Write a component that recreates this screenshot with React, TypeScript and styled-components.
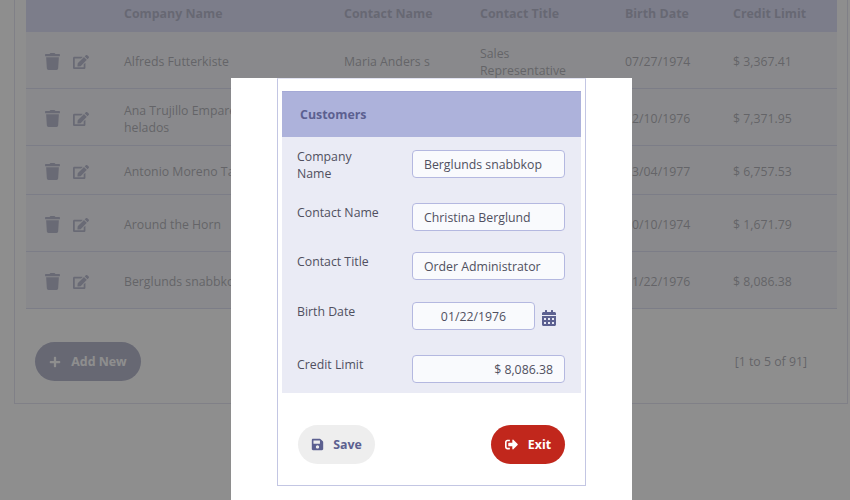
import * as React from "react";
import styled, { createGlobalStyle } from "styled-components";
import { FaCalendarAlt, FaEdit, FaPlus, FaSave, FaSignOutAlt, FaTrash } from "react-icons/fa";

const FONT = `"Open Sans", "Noto Sans", "Liberation Sans", sans-serif`;

const GlobalStyle = createGlobalStyle`
  html, body {
    margin: 0;
    padding: 0;
    height: 500px;
    overflow: hidden;
    background: #fff;
    font-family: ${FONT};
  }
  * { box-sizing: border-box; }
`;

const Page = styled.div`
  width: 850px;
  height: 500px;
  padding: 0 2px 0 14px;
  overflow: hidden;
`;

const Panel = styled.div`
  height: 404px;
  padding: 0 10px 0 11px;
  border: 1px solid #c3c6e3;
  border-top: 0;
`;

const Row = styled.div<{ $h: number }>`
  display: grid;
  grid-template-columns: 98px 220px 136px 145px 108px 105px;
  align-items: center;
  height: ${(p) => p.$h}px;
  padding-top: 3px;
  border-bottom: 1px solid #b4b8e0;
  background: #eaebf5;
  font-size: 12.3px;
  line-height: 17px;
  color: #50505f;
`;

const HeaderRow = styled(Row)`
  background: #b4b8ec;
  border-bottom: 0;
  padding: 0 0 6px;
  font-size: 12.4px;
  font-weight: 700;
  color: #5c6090;
`;

const Cell = styled.div<{ $pad?: number }>`
  padding-right: ${(p) => p.$pad ?? 8}px;
`;

const Actions = styled.div`
  display: flex;
  align-items: center;
  gap: 12px;
  padding-left: 18px;
  color: #666a98;
`;

const Footer = styled.div`
  display: flex;
  align-items: center;
  justify-content: space-between;
  padding: 33px 30px 0 9px;
`;

const Pill = styled.button<{ $bg: string; $fg: string; $w: number; $gap: number }>`
  display: flex;
  align-items: center;
  justify-content: center;
  gap: ${(p) => p.$gap}px;
  width: ${(p) => p.$w}px;
  height: 39px;
  padding: 0;
  border: 0;
  border-radius: 20px;
  background: ${(p) => p.$bg};
  color: ${(p) => p.$fg};
  font-family: ${FONT};
  font-size: 12.4px;
  font-weight: 700;
`;

const Range = styled.span`
  font-size: 12.3px;
  color: #50505f;
`;

const Overlay = styled.div`
  position: fixed;
  inset: 0;
  background: rgba(107, 107, 107, 0.76);
`;

const Modal = styled.div`
  position: fixed;
  left: 231px;
  top: 78px;
  width: 401px;
  height: 422px;
  background: #fff;
  padding: 0 46px;
`;

const Card = styled.div`
  height: 408px;
  padding: 12px 4px 0;
  border: 1px solid #c3c6e3;
  border-top-color: #e2e3f2;
`;

const CardHeader = styled.div`
  display: flex;
  align-items: center;
  height: 46px;
  padding-left: 18px;
  background: #adb2db;
  border-top: 1px solid #a4a9d6;
  font-size: 12.4px;
  font-weight: 700;
  color: #5c6090;
`;

const Form = styled.div`
  height: 256px;
  padding: 13px 16px 0 15px;
  background: #eaebf5;
`;

const Field = styled.div<{ $h: number }>`
  display: grid;
  grid-template-columns: 115px 1fr;
  align-items: start;
  height: ${(p) => p.$h}px;
`;

const Label = styled.label<{ $top?: number }>`
  margin-top: ${(p) => p.$top ?? 1}px;
  font-size: 12.3px;
  line-height: 17px;
  color: #50505f;
  white-space: pre-line;
`;

const Input = styled.div<{ $align?: string; $w?: number }>`
  width: ${(p) => p.$w ?? 153}px;
  height: 28px;
  padding: 0 11px;
  display: flex;
  align-items: center;
  justify-content: ${(p) => p.$align ?? "flex-start"};
  background: #f9fafd;
  border: 1px solid #b4b8e0;
  border-radius: 4px;
  font-size: 12.3px;
  color: #50505f;
`;

const DateWrap = styled.div`
  display: flex;
  align-items: center;
  gap: 6px;
  color: #5c6090;
`;

const CalendarIcon = styled(FaCalendarAlt)`
  margin-top: 3px;
`;

const CardFooter = styled.div`
  display: flex;
  align-items: center;
  justify-content: space-between;
  padding: 32px 16px 0 16px;
`;

const customers = [
  { company: "Alfreds Futterkiste", contact: "Maria Anders s", title: "Sales Representative", birth: "07/27/1974", credit: "$ 3,367.41", h: 57 },
  { company: "Ana Trujillo Emparedados y helados", contact: "", title: "", birth: "12/10/1976", credit: "$ 7,371.95", h: 57 },
  { company: "Antonio Moreno Taquería", contact: "", title: "", birth: "03/04/1977", credit: "$ 6,757.53", h: 49 },
  { company: "Around the Horn", contact: "", title: "", birth: "10/10/1974", credit: "$ 1,671.79", h: 57 },
  { company: "Berglunds snabbkop", contact: "", title: "", birth: "01/22/1976", credit: "$ 8,086.38", h: 57 },
];

export default function App() {
  return (
    <>
      <GlobalStyle />
      <Page>
        <Panel>
          <HeaderRow $h={32}>
            <span />
            <span>Company Name</span>
            <span>Contact Name</span>
            <span>Contact Title</span>
            <span>Birth Date</span>
            <span>Credit Limit</span>
          </HeaderRow>
          {customers.map((c) => (
            <Row key={c.company} $h={c.h}>
              <Actions>
                <FaTrash size={17} />
                <FaEdit size={16} />
              </Actions>
              <Cell $pad={30}>{c.company}</Cell>
              <Cell>{c.contact}</Cell>
              <Cell $pad={40}>{c.title}</Cell>
              <Cell>{c.birth}</Cell>
              <Cell>{c.credit}</Cell>
            </Row>
          ))}
          <Footer>
            <Pill $bg="#5c6090" $fg="#fff" $w={106} $gap={10}>
              <FaPlus size={12} />
              Add New
            </Pill>
            <Range>[1 to 5 of 91]</Range>
          </Footer>
        </Panel>
      </Page>
      <Overlay />
      <Modal>
        <Card>
          <CardHeader>Customers</CardHeader>
          <Form>
            <Field $h={53}>
              <Label $top={-2}>{"Company\nName"}</Label>
              <Input>Berglunds snabbkop</Input>
            </Field>
            <Field $h={49}>
              <Label>Contact Name</Label>
              <Input>Christina Berglund</Input>
            </Field>
            <Field $h={50}>
              <Label>Contact Title</Label>
              <Input>Order Administrator</Input>
            </Field>
            <Field $h={53}>
              <Label>Birth Date</Label>
              <DateWrap>
                <Input $w={123} $align="center">01/22/1976</Input>
                <CalendarIcon size={16} />
              </DateWrap>
            </Field>
            <Field $h={40}>
              <Label>Credit Limit</Label>
              <Input $align="flex-end">$ 8,086.38</Input>
            </Field>
          </Form>
          <CardFooter>
            <Pill $bg="#eeeeee" $fg="#5c6090" $w={77} $gap={9}>
              <FaSave size={13} />
              Save
            </Pill>
            <Pill $bg="#c1271c" $fg="#fff" $w={74} $gap={10}>
              <FaSignOutAlt size={13} />
              Exit
            </Pill>
          </CardFooter>
        </Card>
      </Modal>
    </>
  );
}
